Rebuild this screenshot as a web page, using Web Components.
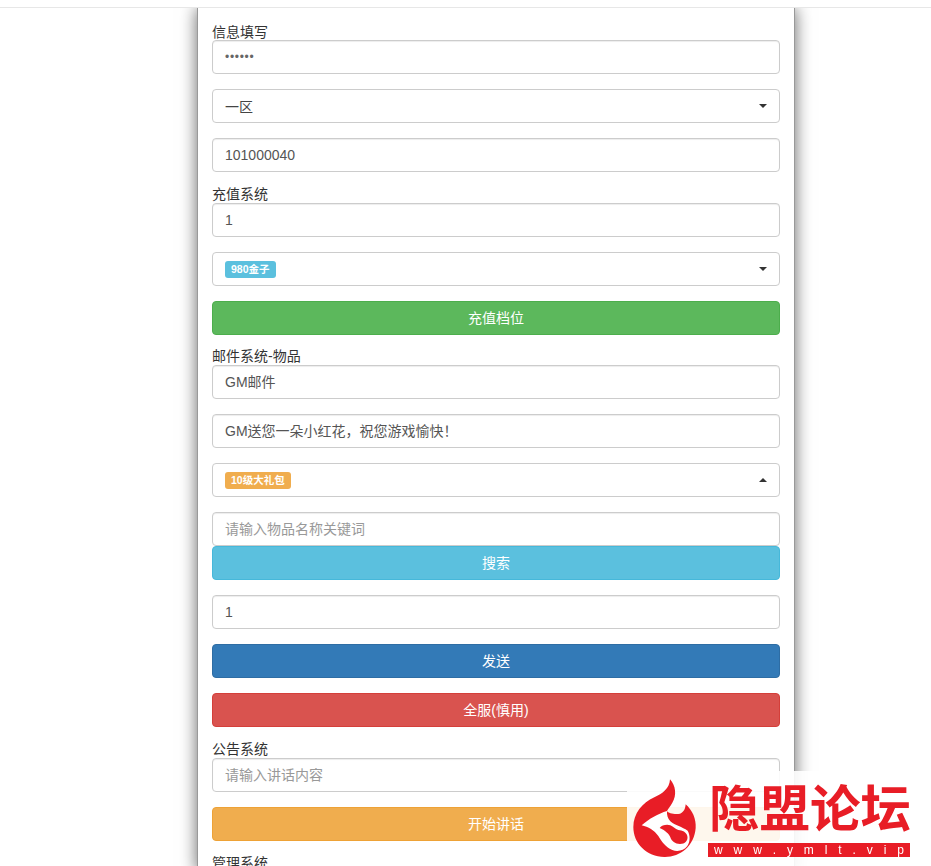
<!DOCTYPE html>
<html lang="zh">
<head>
<meta charset="utf-8">
<title>GM</title>
<style>
	html, body { margin: 0; height: 866px; overflow: hidden; background: #fff; }
	body { font: 14px "Liberation Sans", "Noto Sans CJK SC", sans-serif; color: #333; }
</style>
</head>
<body>
<top-bar></top-bar>
<gm-panel>
	<gm-label>信息填写</gm-label>
	<gm-input class="secret">••••••</gm-input>
	<gm-select>一区</gm-select>
	<gm-input>101000040</gm-input>

	<gm-label>充值系统</gm-label>
	<gm-input>1</gm-input>
	<gm-select><gm-badge tone="info">980金子</gm-badge></gm-select>
	<gm-button tone="success">充值档位</gm-button>

	<gm-label short>邮件系统-物品</gm-label>
	<gm-input>GM邮件</gm-input>
	<gm-input>GM送您一朵小红花，祝您游戏愉快！</gm-input>
	<gm-select open><gm-badge tone="warning">10级大礼包</gm-badge></gm-select>
	<gm-input placeholder flush>请输入物品名称关键词</gm-input>
	<gm-button tone="info">搜索</gm-button>
	<gm-input>1</gm-input>
	<gm-button tone="primary">发送</gm-button>
	<gm-button tone="danger">全服(慎用)</gm-button>

	<gm-label>公告系统</gm-label>
	<gm-input placeholder>请输入讲话内容</gm-input>
	<gm-button tone="warning">开始讲话</gm-button>

	<gm-label>管理系统</gm-label>
</gm-panel>
<forum-logo></forum-logo>

<script>
function define(name, css, html) {
	customElements.define(name, class extends HTMLElement {
		constructor() {
			super();
			this.attachShadow({ mode: "open" });
			this.shadowRoot.innerHTML = `<style>${css}</style>${html}`;
		}
	});
}

define("top-bar", `
	:host { display: block; height: 7px; background: #fff; border-bottom: 1px solid #e7e7e7; position: relative; z-index: 2; }
`, ``);

define("gm-panel", `
	:host {
		display: block;
		box-sizing: border-box;
		width: 598px;
		margin-left: 197px;
		padding: 16px 14px 0;
		background: #fff;
		box-shadow: 0 0 16px rgba(0, 0, 0, .6);
		border-left: 1px solid #999;
		border-right: 1px solid #999;
	}
	.stack { display: flex; flex-direction: column; }
`, `<div class="stack"><slot></slot></div>`);

define("gm-label", `
	:host { display: block; height: 16px; line-height: 15px; font-size: 14px; color: #333; white-space: nowrap; }
	:host(:first-child) { line-height: 16px; }
	:host([short]) { height: 15px; line-height: 13px; }
`, `<slot></slot>`);

define("gm-input", `
	:host {
		display: block;
		box-sizing: border-box;
		height: 34px;
		margin-bottom: 15px;
		padding: 6px 12px;
		line-height: 20px;
		font-size: 14px;
		color: #555;
		background: #fff;
		border: 1px solid #ccc;
		border-radius: 4px;
		box-shadow: inset 0 1px 1px rgba(0, 0, 0, .075);
	}
	:host([placeholder]) { color: #999; }
	:host([flush]) { margin-bottom: 0; }
	:host(.secret) { font-size: 12px; letter-spacing: .7px; line-height: 21px; color: #666; }
`, `<slot></slot>`);

define("gm-select", `
	:host {
		display: flex;
		align-items: center;
		justify-content: space-between;
		box-sizing: border-box;
		height: 34px;
		margin-bottom: 15px;
		padding: 0 12px;
		font-size: 14px;
		color: #444;
		background: #fff;
		border: 1px solid #ccc;
		border-radius: 4px;
	}
	.caret { width: 0; height: 0; border-left: 4px solid transparent; border-right: 4px solid transparent; border-top: 4px solid #333; }
	:host([open]) .caret { border-top: 0; border-bottom: 4px solid #333; }
`, `<span><slot></slot></span><span class="caret"></span>`);

define("gm-badge", `
	:host {
		display: inline-block;
		padding: 2px 6px 3px;
		font-size: 10.5px;
		font-weight: 700;
		line-height: 12px;
		color: #fff;
		border-radius: 3px;
		vertical-align: middle;
		white-space: nowrap;
	}
	:host([tone=info]) { background: #5bc0de; }
	:host([tone=warning]) { background: #f0ad4e; }
`, `<slot></slot>`);

define("gm-button", `
	:host {
		display: block;
		box-sizing: border-box;
		height: 34px;
		margin-bottom: 15px;
		line-height: 32px;
		text-align: center;
		font-size: 14px;
		color: #fff;
		border: 1px solid;
		border-radius: 4px;
	}
	:host([tone=success]) { background: #5cb85c; border-color: #4cae4c; }
	:host([tone=info]) { background: #5bc0de; border-color: #46b8da; }
	:host([tone=primary]) { background: #337ab7; border-color: #2e6da4; }
	:host([tone=danger]) { background: #d9534f; border-color: #d43f3a; }
	:host([tone=warning]) { background: #f0ad4e; border-color: #eea236; }
`, `<slot></slot>`);

define("forum-logo", `
	:host {
		position: fixed;
		left: 627px;
		top: 771px;
		width: 304px;
		height: 95px;
		z-index: 5;
		background: rgba(255, 255, 255, .9);
		display: flex;
		gap: 3px;
	}
	svg { width: 80px; height: 92px; margin: 1px 0 0 -2px; flex: none; overflow: visible; }
	.words { display: flex; flex-direction: column; width: 202px; padding-top: 6px; }
	.name {
		height: 58px;
		font: 700 50.5px/56px "Noto Sans CJK SC", sans-serif;
		color: #e81d26;
		white-space: nowrap;
		margin-left: 1px;
	}
	.url {
		margin-top: 8px;
		height: 14px;
		background: #e81d26;
		color: #fff;
		font: 400 12px/14px "Liberation Sans", sans-serif;
		display: flex;
		justify-content: space-between;
		padding: 0 6px;
	}
`, `
	<svg viewBox="0 0 240 276">
		<path fill="#e81d26" d="M135 22C152 40 156 70 142 92 135 104 130 110 126 117 130 124 150 128 165 125 177 120 181 110 182 97 202 115 214 140 212 168 208 222 165 256 118 255 65 254 25 215 25 165 25 125 52 92 88 76 112 65 134 50 135 22Z"/>
		<path fill="#fff" d="M126 117C100 125 72 140 50 160 70 165 88 175 100 192 110 208 120 224 142 234 158 240 176 236 187 222 196 208 196 190 188 176 172 165 150 160 136 148 128 140 125 128 126 117Z"/>
		<path fill="#e81d26" d="M104 168C110 160 125 156 136 160 146 164 150 172 160 174 172 175 184 180 187 192 190 206 180 216 165 216 150 216 140 208 136 196 132 186 122 176 104 168Z"/>
	</svg>
	<div class="words">
		<div class="name">隐盟论坛</div>
		<div class="url">${"www.ymlt.vip".split("").map(c => `<span>${c}</span>`).join("")}</div>
	</div>
`);
</script>
</body>
</html>
